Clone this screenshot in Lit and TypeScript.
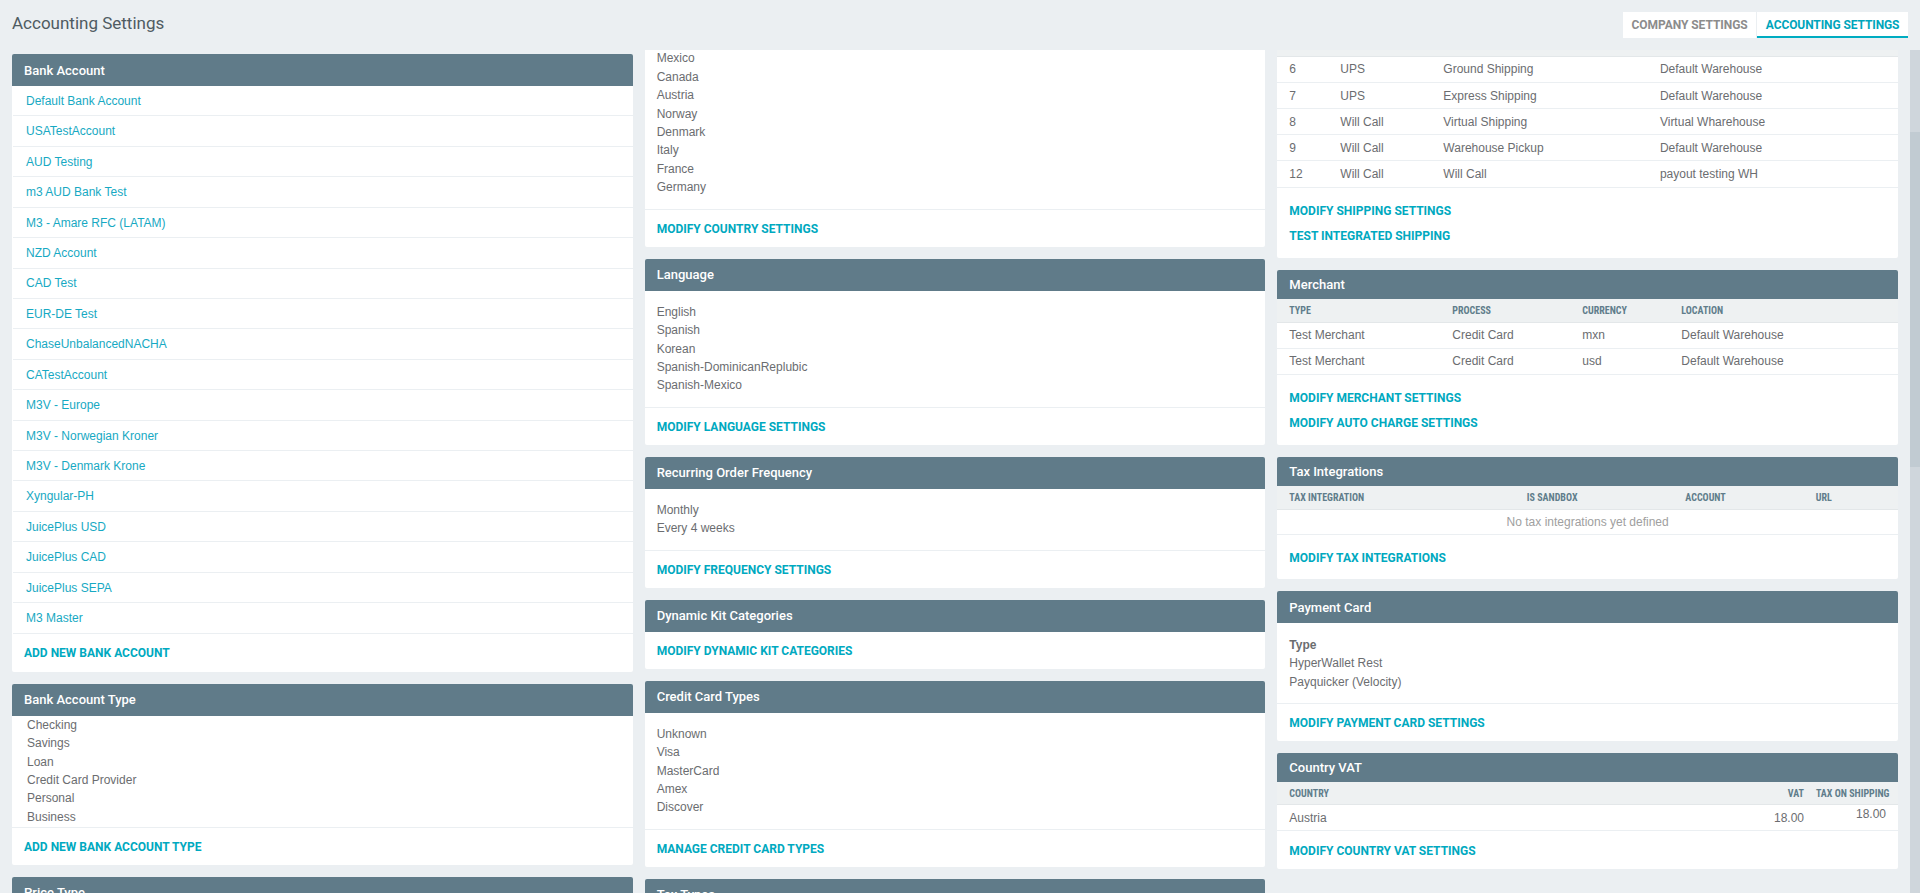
import { LitElement, html, css } from 'lit';
import { customElement } from 'lit/decorators.js';

const bankAccounts = [
  'Default Bank Account', 'USATestAccount', 'AUD Testing', 'm3 AUD Bank Test', 'M3 - Amare RFC (LATAM)',
  'NZD Account', 'CAD Test', 'EUR-DE Test', 'ChaseUnbalancedNACHA', 'CATestAccount', 'M3V - Europe',
  'M3V - Norwegian Kroner', 'M3V - Denmark Krone', 'Xyngular-PH', 'JuicePlus USD', 'JuicePlus CAD',
  'JuicePlus SEPA', 'M3 Master',
];

const shipping = [
  ['6', 'UPS', 'Ground Shipping', 'Default Warehouse'],
  ['7', 'UPS', 'Express Shipping', 'Default Warehouse'],
  ['8', 'Will Call', 'Virtual Shipping', 'Virtual Wharehouse'],
  ['9', 'Will Call', 'Warehouse Pickup', 'Default Warehouse'],
  ['12', 'Will Call', 'Will Call', 'payout testing WH'],
];

@customElement('app-root')
export class AppRoot extends LitElement {
  static styles = css`
    :host {
      display: block;
      height: 100vh;
      overflow: hidden;
      background: #ebeff2;
      color: #6b6d70;
      font: 12px/18.4px 'Liberation Sans', Arial, sans-serif;
    }
    * { box-sizing: border-box; }
    .top {
      display: flex;
      justify-content: space-between;
      height: 50px;
      padding: 12px 12px 0;
    }
    h1 {
      margin: 0;
      font: 400 17px/22px Roboto, sans-serif;
      color: #4f5b62;
    }
    .tabs { display: flex; gap: 1px; height: 26px; }
    .tab {
      display: flex;
      align-items: center;
      padding: 0 8.6px;
      background: #fff;
      color: #8c8c8c;
      font: 700 12px Roboto, sans-serif;
      letter-spacing: -0.05px;
    }
    .tab.on {
      color: #00a5bb;
      letter-spacing: -0.1px;
      box-shadow: inset 0 -2px 0 #00acc1;
    }
    .body { display: flex; height: 843px; }
    .main {
      flex: 1;
      display: grid;
      grid-template-columns: repeat(3, 1fr);
      gap: 12px;
      padding: 0 12px;
      height: 100%;
      overflow: hidden;
    }
    .scrollbar { width: 10px; background: #cfd6dc; padding-top: 82px; }
    .thumb { height: 335px; background: #c1cbd2; }
    .col { display: flex; flex-direction: column; gap: 12px; min-width: 0; }
    .col.first { padding-top: 4px; }
    .panel { background: #fff; border-radius: 2px; flex: none; }
    .panel.clip { margin-top: -0.6px; border-radius: 0 0 2px 2px; }
    .head {
      display: flex;
      align-items: center;
      height: 32px;
      padding: 0 12px;
      background: #607b89;
      color: #fff;
      border-radius: 2px 2px 0 0;
      font: 500 13px Roboto, sans-serif;
    }
    .head.tight { height: 29px; }
    .links a {
      display: block;
      padding: 5.95px 13px 5.09px;
      margin-left: 1px;
      border-bottom: 1px solid #ebeff2;
      color: #17a9c3;
    }
    .list { padding: 12px; }
    .list.flush { padding: 0.2px 15px 0.4px; }
    .list.nobottom { padding: 0 12px 12.4px; }
    .list.nudge { padding-top: 12.2px; }
    .list.pay { padding: 12.5px 12px 11.7px; }
    .list div { height: 18.4px; }
    .list .bold { font-weight: 700; }
    .foot {
      display: flex;
      align-items: center;
      height: 38px;
      padding: 1.4px 12px 0;
      border-top: 1px solid #ebeff2;
    }
    .foot.none { border-top: 0; }
    .foot.short { height: 37px; border-top: 0; }
    .foot.stack {
      flex-direction: column;
      align-items: flex-start;
      justify-content: flex-start;
      gap: 11px;
      height: auto;
      padding: 16.5px 12px 15px;
      border-top: 0;
    }
    .foot.stack.single { padding: 15.5px 12px 14.6px; }
    .action {
      color: #00a9c0;
      font: 700 12px/14px Roboto, sans-serif;
      text-transform: uppercase;
    }
    table { width: 100%; border-collapse: collapse; table-layout: fixed; }
    th {
      height: 23px;
      padding: 0 12px;
      background: #eef1f2;
      border-bottom: 1px solid #e3e7e9;
      color: #607d8b;
      font: 700 10px Roboto, sans-serif;
      font-stretch: 75%;
      text-align: left;
      text-transform: uppercase;
      white-space: nowrap;
    }
    td {
      padding: 3.4px 12px;
      border-bottom: 1px solid #ebeff2;
    }
    .stub { height: 6.5px; background: #eef1f2; border-bottom: 1px solid #e3e7e9; }
    td.empty { padding: 3px 12px; text-align: center; color: #a0a0a0; }
    .ship td { padding: 3.8px 12px 3px; }
    .ship td:nth-child(1) { width: 51px; }
    .ship td:nth-child(2) { width: 103px; }
    .ship td:nth-child(3) { width: 216.6px; }
    .merch th:nth-child(1) { width: 163px; }
    .merch th:nth-child(2) { width: 130px; }
    .merch th:nth-child(3) { width: 99px; }
    .tax th:nth-child(1) { width: 237.5px; }
    .tax th:nth-child(2) { width: 158.5px; }
    .tax th:nth-child(3) { width: 130.5px; }
    .vat th:nth-child(2), .vat td:nth-child(2) { width: 100px; text-align: right; }
    .vat th:nth-child(3), .vat td:nth-child(3) { width: 82px; padding-left: 0; text-align: right; }
    .vat td:nth-child(3) { vertical-align: top; padding-top: 0; }
  `;

  private list(items: string[], cls = '') {
    return html`<div class="list ${cls}">${items.map((i) => html`<div>${i}</div>`)}</div>`;
  }

  private foot(label: string, cls = '') {
    return html`<div class="foot ${cls}"><span class="action">${label}</span></div>`;
  }

  private rows(data: string[][]) {
    return data.map((r) => html`<tr>${r.map((c) => html`<td>${c}</td>`)}</tr>`);
  }

  private headers(labels: string[]) {
    return html`<tr>${labels.map((l) => html`<th>${l}</th>`)}</tr>`;
  }

  render() {
    return html`
      <div class="top">
        <h1>Accounting Settings</h1>
        <div class="tabs">
          <div class="tab">COMPANY SETTINGS</div>
          <div class="tab on">ACCOUNTING SETTINGS</div>
        </div>
      </div>
      <div class="body">
        <div class="main">
          <div class="col first">
            <div class="panel">
              <div class="head">Bank Account</div>
              <div class="links">${bankAccounts.map((b) => html`<a>${b}</a>`)}</div>
              ${this.foot('Add new bank account', 'none')}
            </div>
            <div class="panel">
              <div class="head">Bank Account Type</div>
              ${this.list(['Checking', 'Savings', 'Loan', 'Credit Card Provider', 'Personal', 'Business'], 'flush')}
              ${this.foot('Add new bank account type')}
            </div>
            <div class="panel"><div class="head">Price Type</div></div>
          </div>

          <div class="col">
            <div class="panel clip">
              ${this.list(['Mexico', 'Canada', 'Austria', 'Norway', 'Denmark', 'Italy', 'France', 'Germany'], 'nobottom')}
              ${this.foot('Modify country settings')}
            </div>
            <div class="panel">
              <div class="head">Language</div>
              ${this.list(['English', 'Spanish', 'Korean', 'Spanish-DominicanReplubic', 'Spanish-Mexico'])}
              ${this.foot('Modify language settings')}
            </div>
            <div class="panel">
              <div class="head">Recurring Order Frequency</div>
              ${this.list(['Monthly', 'Every 4 weeks'], 'nudge')}
              ${this.foot('Modify frequency settings')}
            </div>
            <div class="panel">
              <div class="head">Dynamic Kit Categories</div>
              ${this.foot('Modify dynamic kit categories', 'short')}
            </div>
            <div class="panel">
              <div class="head">Credit Card Types</div>
              ${this.list(['Unknown', 'Visa', 'MasterCard', 'Amex', 'Discover'])}
              ${this.foot('Manage credit card types')}
            </div>
            <div class="panel"><div class="head">Tax Types</div></div>
          </div>

          <div class="col">
            <div class="panel">
              <div class="stub"></div>
              <table class="ship">${this.rows(shipping)}</table>
              <div class="foot stack">
                <span class="action">Modify shipping settings</span>
                <span class="action">Test integrated shipping</span>
              </div>
            </div>
            <div class="panel">
              <div class="head tight">Merchant</div>
              <table class="merch">
                ${this.headers(['Type', 'Process', 'Currency', 'Location'])}
                ${this.rows([
                  ['Test Merchant', 'Credit Card', 'mxn', 'Default Warehouse'],
                  ['Test Merchant', 'Credit Card', 'usd', 'Default Warehouse'],
                ])}
              </table>
              <div class="foot stack">
                <span class="action">Modify merchant settings</span>
                <span class="action">Modify auto charge settings</span>
              </div>
            </div>
            <div class="panel">
              <div class="head tight">Tax Integrations</div>
              <table class="tax">
                ${this.headers(['Tax Integration', 'Is Sandbox', 'Account', 'URL'])}
                <tr><td class="empty" colspan="4">No tax integrations yet defined</td></tr>
              </table>
              <div class="foot stack single"><span class="action">Modify tax integrations</span></div>
            </div>
            <div class="panel">
              <div class="head">Payment Card</div>
              <div class="list pay">
                <div class="bold">Type</div>
                <div>HyperWallet Rest</div>
                <div>Payquicker (Velocity)</div>
              </div>
              ${this.foot('Modify payment card settings')}
            </div>
            <div class="panel">
              <div class="head tight">Country VAT</div>
              <table class="vat">
                ${this.headers(['Country', 'VAT', 'Tax on shipping'])}
                ${this.rows([['Austria', '18.00', '18.00']])}
              </table>
              ${this.foot('Modify country VAT settings', 'none')}
            </div>
          </div>
        </div>
        <div class="scrollbar"><div class="thumb"></div></div>
      </div>
    `;
  }
}
